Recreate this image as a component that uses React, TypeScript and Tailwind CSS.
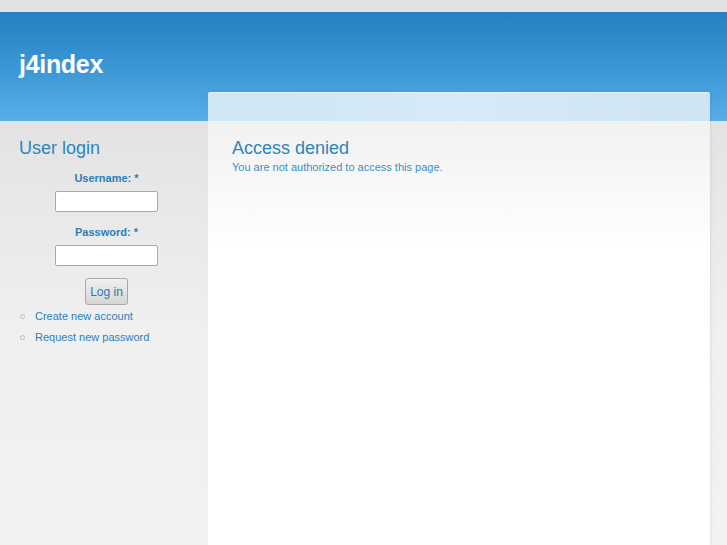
export default function App() {
  return (
    <div className="flex min-h-[545px] flex-col bg-[#e2e2e2] font-['Liberation_Sans',Arial,sans-serif]">
      {/* top strip */}
      <div className="h-[12px] bg-[#e2e2e2]" />

      {/* header */}
      <header className="h-[109px] bg-gradient-to-b from-[#2780c1] via-[#3a96d4] to-[#57afe7] pl-[19px] pt-[37px]">
        <h1 className="text-[25px] font-bold leading-[30px] tracking-[-0.3px] text-white">j4index</h1>
      </header>

      {/* body */}
      <div className="flex flex-1 bg-gradient-to-b from-[#e3e3e3] via-[#f0f0f0] to-[#f2f2f2]">
        {/* sidebar */}
        <aside className="w-[208px] shrink-0 pl-[19px] pr-[14px] pt-[16px]">
          <h2 className="text-[18px] leading-[22px] text-[#2c86bf]">User login</h2>
          <form className="flex flex-col items-center">
            <label className="mt-[12px] text-[11px] font-bold leading-[14px] text-[#2a7fb8]">
              Username: <span className="text-[#2a7fb8]">*</span>
            </label>
            <input className="mt-[6px] h-[21px] w-[103px] rounded-[2px] border border-[#a8a8a8] bg-white" />
            <label className="mt-[13px] text-[11px] font-bold leading-[14px] text-[#2a7fb8]">
              Password: <span className="text-[#2a7fb8]">*</span>
            </label>
            <input type="password" className="mt-[6px] h-[21px] w-[103px] rounded-[2px] border border-[#a8a8a8] bg-white" />
            <button
              type="button"
              className="mt-[12px] h-[27px] w-[43px] rounded-[3px] border border-[#a9a9a9] bg-gradient-to-b from-[#f0f0f0] to-[#d6d6d6] text-[12px] text-[#2a7ab3]"
            >
              Log in
            </button>
          </form>
          <ul className="mt-[3px] flex flex-col gap-[5px]">
            <li className="flex items-center text-[11px] leading-[16px] text-[#2b7fbd]">
              <span className="ml-[1px] mr-[10px] h-[5px] w-[5px] rounded-full border border-[#bdbdbd]" />
              Create new account
            </li>
            <li className="flex items-center text-[11px] leading-[16px] text-[#2b7fbd]">
              <span className="ml-[1px] mr-[10px] h-[5px] w-[5px] rounded-full border border-[#bdbdbd]" />
              Request new password
            </li>
          </ul>
        </aside>

        {/* main panel */}
        <main className="-mt-[29px] flex w-[502px] shrink-0 flex-col shadow-[1px_0_3px_rgba(0,0,0,0.08)]">
          <div className="h-[29px] rounded-t-[2px] border-t border-[#e6f1f9] bg-gradient-to-r from-[#d0e6f5] via-[#d6eaf8] to-[#cfe4f3]" />
          <div className="flex-1 bg-gradient-to-b from-[#f1f1f1] via-white via-30% to-white pl-[24px] pt-[16px]">
            <h2 className="text-[18px] leading-[22px] text-[#2a86be]">Access denied</h2>
            <p className="mt-[1px] text-[11px] leading-[14px] text-[#3a8fc4]">You are not authorized to access this page.</p>
          </div>
        </main>

        <div className="flex-1" />
      </div>
    </div>
  );
}
